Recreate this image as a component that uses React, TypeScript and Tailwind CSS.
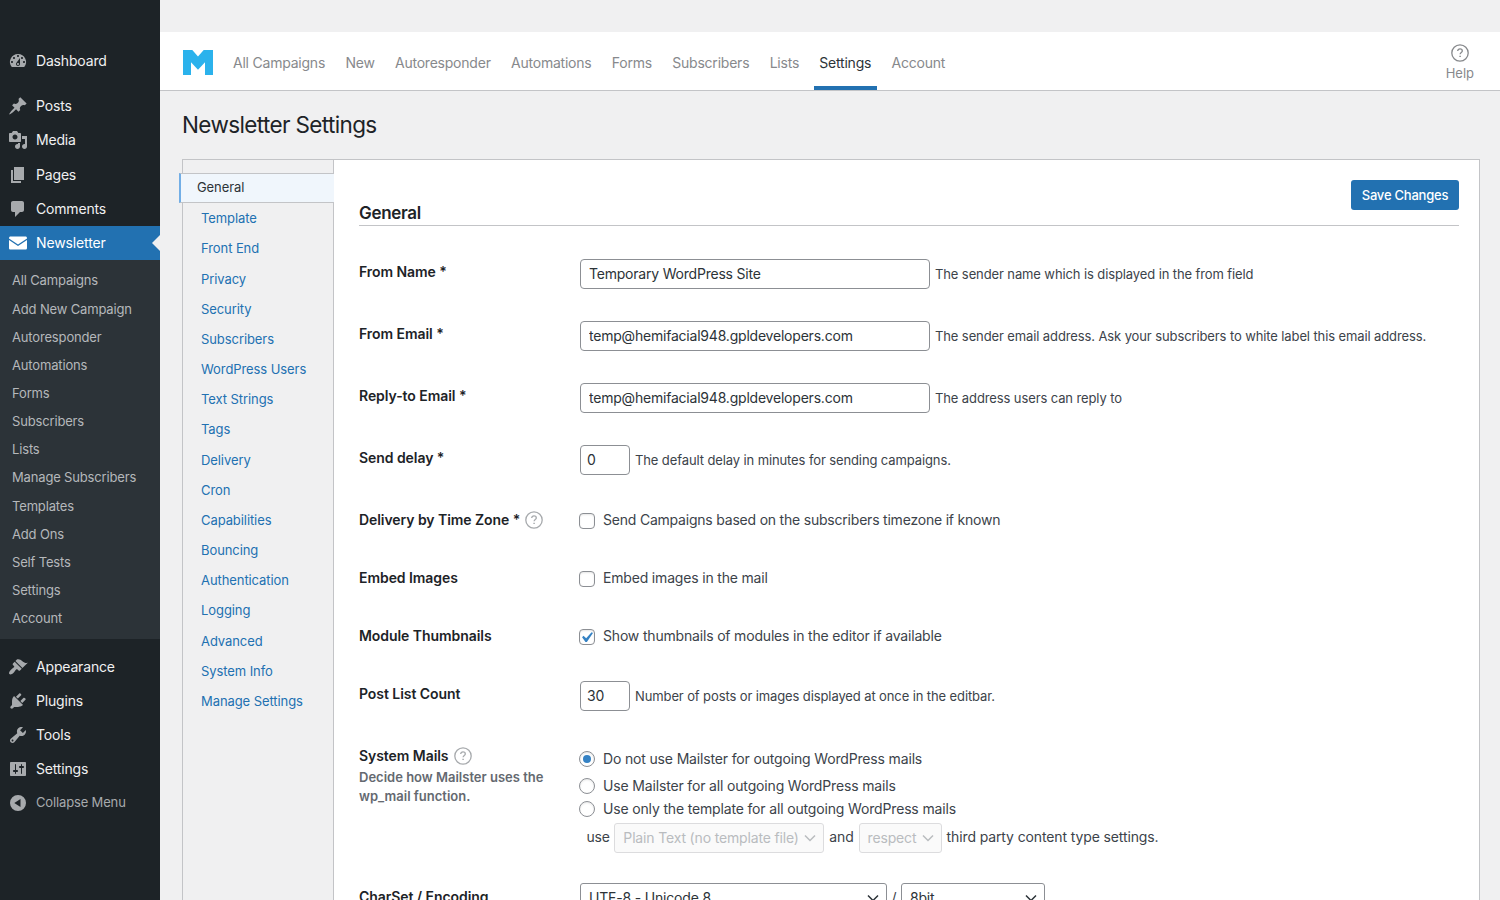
import { ReactNode } from "react";

type MenuItem = { label: string; icon: ReactNode };

const topMenu: MenuItem[] = [
  {
    label: "Posts",
    icon: (
      <path d="M10.44 3.02l1.82-1.82 6.36 6.35-1.83 1.82c-1.05-.68-2.48-.57-3.41.36l-.75.75c-.92.93-1.04 2.35-.35 3.41l-1.83 1.82-2.41-2.41-2.8 2.79c-.42.42-3.38 2.71-3.8 2.29s1.86-3.39 2.28-3.81l2.79-2.79L4.1 9.36l1.83-1.82c1.05.69 2.48.57 3.4-.36l.75-.75c.93-.92 1.05-2.35.36-3.41z" />
    ),
  },
  {
    label: "Media",
    icon: (
      <path d="M13 11V4c0-.55-.45-1-1-1h-1.67L9 1H5L3.67 3H2c-.55 0-1 .45-1 1v7c0 .55.45 1 1 1h10c.55 0 1-.45 1-1zM7 4.5c1.38 0 2.5 1.12 2.5 2.5S8.38 9.5 7 9.5 4.5 8.38 4.5 7 5.62 4.5 7 4.5zM14 6h5v10.5c0 1.38-1.12 2.5-2.5 2.5S14 17.88 14 16.5s1.12-2.5 2.5-2.5c.17 0 .34.02.5.05V9h-3V6zm-4 8.05V13h2v3.5c0 1.38-1.12 2.5-2.5 2.5S7 17.88 7 16.5 8.12 14 9.5 14c.17 0 .34.02.5.05z" />
    ),
  },
  { label: "Pages", icon: <path d="M6 15V2h10v13H6zm-1 1h8v2H3V5h2v11z" /> },
  {
    label: "Comments",
    icon: (
      <path d="M5 2h9c1.1 0 2 .9 2 2v7c0 1.1-.9 2-2 2h-2l-5 5v-5H5c-1.1 0-2-.9-2-2V4c0-1.1.9-2 2-2z" />
    ),
  },
];

const bottomMenu: MenuItem[] = [
  {
    label: "Appearance",
    icon: (
      <path d="M14.48 11.06L7.41 3.99l1.5-1.5c.5-.56 2.3-.47 3.51.32 1.21.8 1.43 1.28 2.91 2.1 1.18.64 2.45 1.26 4.45.85zm-.71.71L6.7 4.7 4.93 6.47c-.39.39-.39 1.02 0 1.41l1.06 1.06c.39.39.39 1.03 0 1.42-.6.6-1.43 1.11-2.21 1.69-.35.26-.7.53-1.01.84C1.43 14.23.4 16.08 1.4 17.07c.99 1 2.84-.03 4.18-1.36.31-.31.58-.66.85-1.02.57-.78 1.08-1.61 1.69-2.21.39-.39 1.02-.39 1.41 0l1.06 1.06c.39.39 1.02.39 1.41 0z" />
    ),
  },
  {
    label: "Plugins",
    icon: (
      <path d="M13.11 4.36L9.87 7.6 8 5.73l3.24-3.24c.35-.34 1.05-.2 1.56.32.52.51.66 1.21.31 1.55zm-8 1.77l.91-1.12 9.01 9.01-1.19.84c-.71.71-2.63 1.16-3.82 1.16H6.14L4.9 17.26c-.59.59-1.54.59-2.12 0-.59-.58-.59-1.53 0-2.12l1.24-1.24v-3.88c0-1.13.4-3.19 1.09-3.89zm7.26 3.97l3.24-3.24c.34-.35 1.04-.21 1.55.31.52.51.66 1.21.31 1.55l-3.24 3.25z" />
    ),
  },
  {
    label: "Tools",
    icon: (
      <path d="M16.68 9.77c-1.34 1.34-3.3 1.67-4.95.99l-5.41 6.52c-.99.99-2.59.99-3.58 0s-.99-2.59 0-3.57l6.52-5.42c-.68-1.65-.35-3.61.99-4.95 1.28-1.28 3.12-1.62 4.72-1.06l-2.89 2.89 2.82 2.82 2.86-2.87c.53 1.58.18 3.39-1.08 4.65zM3.81 16.21c.4.39 1.04.39 1.43 0 .4-.4.4-1.04 0-1.43-.39-.4-1.03-.4-1.43 0-.39.39-.39 1.03 0 1.43z" />
    ),
  },
  {
    label: "Settings",
    icon: (
      <path d="M18 16V4c0-.55-.45-1-1-1H3c-.55 0-1 .45-1 1v12c0 .55.45 1 1 1h14c.55 0 1-.45 1-1zM8 11h1c.55 0 1 .45 1 1s-.45 1-1 1H8v1.5c0 .28-.22.5-.5.5s-.5-.22-.5-.5V13H6c-.55 0-1-.45-1-1s.45-1 1-1h1V5.5c0-.28.22-.5.5-.5s.5.22.5.5V11zm5-2h-1c-.55 0-1-.45-1-1s.45-1 1-1h1V5.5c0-.28.22-.5.5-.5s.5.22.5.5V7h1c.55 0 1 .45 1 1s-.45 1-1 1h-1v5.5c0 .28-.22.5-.5.5s-.5-.22-.5-.5V9z" />
    ),
  },
];

const submenu = [
  "All Campaigns",
  "Add New Campaign",
  "Autoresponder",
  "Automations",
  "Forms",
  "Subscribers",
  "Lists",
  "Manage Subscribers",
  "Templates",
  "Add Ons",
  "Self Tests",
  "Settings",
  "Account",
];

const headerTabs = [
  "All Campaigns",
  "New",
  "Autoresponder",
  "Automations",
  "Forms",
  "Subscribers",
  "Lists",
  "Settings",
  "Account",
];

const sections = [
  "Template",
  "Front End",
  "Privacy",
  "Security",
  "Subscribers",
  "WordPress Users",
  "Text Strings",
  "Tags",
  "Delivery",
  "Cron",
  "Capabilities",
  "Bouncing",
  "Authentication",
  "Logging",
  "Advanced",
  "System Info",
  "Manage Settings",
];

function Icon({ children }: { children: ReactNode }) {
  return (
    <svg viewBox="0 0 20 20" className="ml-2 mr-2 size-5 shrink-0 fill-current">
      {children}
    </svg>
  );
}

function SideLink({ label, icon }: MenuItem) {
  return (
    <a className="flex h-[34.2px] items-center text-sm tracking-[-0.17px] text-[#f0f0f1]">
      <span className="flex text-[#a7aaad]">
        <Icon>{icon}</Icon>
      </span>
      {label}
    </a>
  );
}

function Sidebar() {
  return (
    <nav className="h-[900px] w-40 shrink-0 bg-[#1d2327] pt-11">
      <SideLink
        label="Dashboard"
        icon={
          <path
            fillRule="evenodd"
            d="M3.76 16h12.48A7.998 7.998 0 0 0 10 3a7.998 7.998 0 0 0-6.24 13zM10 4c.55 0 1 .45 1 1s-.45 1-1 1-1-.45-1-1 .45-1 1-1zM6 6c.55 0 1 .45 1 1s-.45 1-1 1-1-.45-1-1 .45-1 1-1zm8 0c.55 0 1 .45 1 1s-.45 1-1 1-1-.45-1-1 .45-1 1-1zm-5.37 5.55L12 7v6c0 1.1-.9 2-2 2s-2-.9-2-2c0-.57.24-1.08.63-1.45zM4 10c.55 0 1 .45 1 1s-.45 1-1 1-1-.45-1-1 .45-1 1-1zm12 0c.55 0 1 .45 1 1s-.45 1-1 1-1-.45-1-1 .45-1 1-1zm-5 3c0-.55-.45-1-1-1s-1 .45-1 1 .45 1 1 1 1-.45 1-1z"
          />
        }
      />
      <div className="mt-[11px]">
        {topMenu.map((item) => (
          <SideLink key={item.label} {...item} />
        ))}
      </div>
      <a className="flex h-[34px] items-center bg-[#2271b1] text-sm tracking-[-0.13px] text-white">
        <Icon>
          <path d="M1 5.2c0-1 .6-1.7 1.6-1.7h14.8c1 0 1.6.7 1.6 1.7v.3l-9 6-9-6z" />
          <path d="M1 7l9 6 9-6v7.9c0 1-.6 1.6-1.6 1.6H2.6c-1 0-1.6-.6-1.6-1.6z" />
        </Icon>
        Newsletter
        <span className="ml-auto border-y-8 border-r-8 border-y-transparent border-r-[#f0f0f1]" />
      </a>
      <div className="h-[379px] bg-[#2c3338] pt-[7.1px] text-[13px] tracking-[-0.16px] text-[#b5b8bb]">
        {submenu.map((label) => (
          <a key={label} className="flex h-[28.17px] items-center pl-3">
            {label}
          </a>
        ))}
      </div>
      <div className="pt-[10.6px]">
        {bottomMenu.map((item) => (
          <SideLink key={item.label} {...item} />
        ))}
      </div>
      <a className="flex h-[33px] items-center text-[13px] tracking-[-0.15px] text-[#a7aaad]">
        <Icon>
          <path
            fillRule="evenodd"
            d="M10 2a8 8 0 1 0 0 16 8 8 0 0 0 0-16zM12.5 6v8L6.3 10z"
          />
        </Icon>
        Collapse Menu
      </a>
    </nav>
  );
}

function HelpIcon({ className }: { className: string }) {
  return (
    <svg
      viewBox="0 0 18 18"
      fill="none"
      stroke="currentColor"
      strokeWidth="1.3"
      className={className}
    >
      <circle cx="9" cy="9" r="8.2" />
      <path d="M6.7 7.1c0-1.4 1-2.3 2.3-2.3s2.3.8 2.3 2.1c0 1.5-2.2 1.7-2.2 3.4" />
      <path d="M9.1 11.7v1.4" strokeWidth="1.5" />
    </svg>
  );
}

function Header() {
  return (
    <header className="flex h-[59px] border-b border-[#c3c4c7] bg-white pl-[23px] pr-[26px]">
      <svg viewBox="0 0 30 25" className="mt-[18px] h-[25px] w-[30px] fill-[#2bb2ec]">
        <path d="M0 0h9.3L15 6.5 20.7 0H30v25h-8V12.3L15 19.7 8 12.3V25H0z" />
      </svg>
      <div className="ml-[14.5px] flex text-sm tracking-[-0.22px] text-[#87898c]">
        {headerTabs.map((tab) => (
          <a
            key={tab}
            className={
              tab === "Settings"
                ? "mr-[9.3px] flex h-[58px] items-center border-b-4 border-[#2271b1] px-[5.5px] pt-[7px] text-[#2c3338]"
                : "mr-[9.3px] flex h-[58px] items-center px-[5.5px] pt-[3px]"
            }
          >
            {tab}
          </a>
        ))}
      </div>
      <div className="ml-auto flex flex-col items-center pt-3 text-[13px] text-[#87898c]">
        <HelpIcon className="size-[18px]" />
        <span className="mt-px leading-5">Help</span>
      </div>
    </header>
  );
}

function Row({
  label,
  help,
  note,
  className,
  children,
}: {
  label: string;
  help?: boolean;
  note?: string;
  className: string;
  children: ReactNode;
}) {
  return (
    <div className={`flex ${className}`}>
      <div className="w-[220px] shrink-0 pt-[21px] font-semibold text-[#1d2327]">
        <div className="flex h-5 items-center text-sm tracking-[-0.06px]">
          {label}
          {help && <HelpIcon className="ml-[5px] size-[18px] text-[#a7aaad]" />}
        </div>
        {note && (
          <p className="mt-0.5 w-[200px] text-[13px] leading-[19px] text-[#646970]">{note}</p>
        )}
      </div>
      <div className="text-sm tracking-[-0.18px] text-[#3c434a]">{children}</div>
    </div>
  );
}

function Field({
  value,
  hint,
  className,
}: {
  value: string;
  hint: string;
  className: string;
}) {
  return (
    <div className="ml-px flex items-center pt-[18px]">
      <input
        defaultValue={value}
        className={`h-[30px] rounded border border-[#8c8f94] bg-white pb-0.5 text-sm tracking-[-0.21px] text-[#2c3338] ${className}`}
      />
      <span className="ml-[5px] whitespace-nowrap text-[13px] tracking-[-0.11px]">{hint}</span>
    </div>
  );
}

function Check({ checked, children }: { checked?: boolean; children: ReactNode }) {
  return (
    <label className="flex h-5 items-center whitespace-nowrap">
      <span className="mr-2 mt-0.5 flex size-4 items-start justify-start rounded border border-[#8c8f94] bg-white shadow-[inset_0_1px_2px_rgba(0,0,0,0.1)]">
        {checked && (
          <svg viewBox="0 0 20 20" className="-ml-1 -mt-[3px] size-[21px] shrink-0 fill-[#3582c4]">
            <path d="M14.83 4.89l1.34.94-5.81 8.38H9.02L5.78 9.67l1.34-1.25 2.57 2.4z" />
          </svg>
        )}
      </span>
      {children}
    </label>
  );
}

function Radio({
  checked,
  className,
  children,
}: {
  checked?: boolean;
  className: string;
  children: ReactNode;
}) {
  return (
    <label className={`flex items-center whitespace-nowrap ${className}`}>
      <span className="mr-2 flex size-4 items-center justify-center rounded-full border border-[#8c8f94] bg-white shadow-[inset_0_1px_2px_rgba(0,0,0,0.1)]">
        {checked && <span className="size-2 rounded-full bg-[#3582c4]" />}
      </span>
      {children}
    </label>
  );
}

function Dropdown({ value, className }: { value: string; className: string }) {
  return (
    <span
      className={`flex h-[30px] shrink-0 items-center justify-between whitespace-nowrap rounded-[3px] border pl-2 pr-[7px] ${className}`}
    >
      {value}
      <svg
        viewBox="0 0 12 8"
        fill="none"
        stroke="currentColor"
        strokeWidth="1.5"
        className="h-2 w-3"
      >
        <path d="M1 1.5l5 5 5-5" />
      </svg>
    </span>
  );
}

function SectionNav() {
  return (
    <div className="w-[151px] shrink-0 border-r border-[#c3c4c7] bg-[#f0f0f1] pt-[13px] text-[13px] tracking-[-0.08px] text-[#2271b1]">
      <a className="relative -ml-1 -mr-px mb-[0.85px] flex h-[30px] items-center border-y border-l-2 border-y-[#c3c4c7] border-l-[#72aee6] bg-[#f0f6fc] pl-4 text-[#2c3338]">
        General
      </a>
      {sections.map((section) => (
        <a key={section} className="flex h-[30.18px] items-center pl-[18px]">
          {section}
        </a>
      ))}
    </div>
  );
}

function SettingsForm() {
  return (
    <div className="flex-1 pl-[25px] pr-5">
      <div className="flex h-[66px] items-end justify-between border-b border-[#c3c4c7]">
        <h2 className="text-[17px] font-semibold leading-6 tracking-[-0.3px] text-[#1d2327]">
          General
        </h2>
        <button className="mb-[15px] h-[30px] w-[108px] rounded-[3px] bg-[#2271b1] pt-px text-[13px] font-medium tracking-[-0.22px] text-white">
          Save Changes
        </button>
      </div>
      <div className="pt-[15px]">
        <Row label="From Name *" className="h-[62px]">
          <Field
            value="Temporary WordPress Site"
            hint="The sender name which is displayed in the from field"
            className="w-[350px] px-2"
          />
        </Row>
        <Row label="From Email *" className="h-[62px]">
          <Field
            value="temp@hemifacial948.gpldevelopers.com"
            hint="The sender email address. Ask your subscribers to white label this email address."
            className="w-[350px] px-2"
          />
        </Row>
        <Row label="Reply-to Email *" className="h-[62px]">
          <Field
            value="temp@hemifacial948.gpldevelopers.com"
            hint="The address users can reply to"
            className="w-[350px] px-2"
          />
        </Row>
        <Row label="Send delay *" className="h-[62px]">
          <Field
            value="0"
            hint="The default delay in minutes for sending campaigns."
            className="w-[50px] px-1.5"
          />
        </Row>
        <Row label="Delivery by Time Zone *" help className="h-[58px]">
          <div className="pt-[21px] tracking-[-0.21px]">
            <Check>Send Campaigns based on the subscribers timezone if known</Check>
          </div>
        </Row>
        <Row label="Embed Images" className="h-[58px]">
          <div className="pt-[21px]">
            <Check>Embed images in the mail</Check>
          </div>
        </Row>
        <Row label="Module Thumbnails" className="h-[58px]">
          <div className="pt-[21px]">
            <Check checked>Show thumbnails of modules in the editor if available</Check>
          </div>
        </Row>
        <Row label="Post List Count" className="h-[62px]">
          <Field
            value="30"
            hint="Number of posts or images displayed at once in the editbar."
            className="w-[50px] px-1.5"
          />
        </Row>
        <Row
          label="System Mails"
          help
          note="Decide how Mailster uses the wp_mail function."
          className="h-[141px]"
        >
          <div className="pt-[22px] tracking-[-0.16px]">
            <Radio checked className="h-6">
              Do not use Mailster for outgoing WordPress mails
            </Radio>
            <Radio className="mt-[3px] h-6">Use Mailster for all outgoing WordPress mails</Radio>
            <Radio className="h-[22px]">
              Use only the template for all outgoing WordPress mails
            </Radio>
            <div className="mt-[3px] flex items-center whitespace-nowrap pl-[7.5px]">
              <span className="-mt-0.5">use</span>
              <Dropdown
                value="Plain Text (no template file)"
                className="ml-[4.5px] mr-[5px] w-[210px] border-[#dcdcde] bg-[#f6f7f7]/60 text-[#b9bcbf]"
              />
              <span className="-mt-0.5">and</span>
              <Dropdown
                value="respect"
                className="mx-[5px] w-[83px] border-[#dcdcde] bg-[#f6f7f7]/60 text-[#b9bcbf]"
              />
              <span className="-mt-0.5 tracking-[-0.12px]">
                third party content type settings.
              </span>
            </div>
          </div>
        </Row>
        <Row label="CharSet / Encoding" className="h-[62px]">
          <div className="ml-px flex items-center pt-[17px]">
            <Dropdown
              value="UTF-8 - Unicode 8"
              className="w-[307px] border-[#8c8f94] bg-white text-[#2c3338]"
            />
            <span className="w-3.5 text-center">/</span>
            <Dropdown
              value="8bit"
              className="w-36 border-[#8c8f94] bg-white text-[#2c3338]"
            />
          </div>
        </Row>
      </div>
    </div>
  );
}

export default function App() {
  return (
    <div className="flex h-[900px] w-[1500px] overflow-hidden bg-[#f0f0f1] font-['Inter',sans-serif]">
      <Sidebar />
      <main className="flex h-[900px] flex-1 flex-col overflow-hidden pt-8">
        <Header />
        <h1 className="mb-[18px] ml-[22px] mt-[18px] text-[22.5px] leading-8 tracking-[-0.63px] text-[#1d2327]">
          Newsletter Settings
        </h1>
        <div className="ml-[22px] mr-5 flex h-[800px] shrink-0 border border-[#c3c4c7] bg-white">
          <SectionNav />
          <SettingsForm />
        </div>
      </main>
    </div>
  );
}
